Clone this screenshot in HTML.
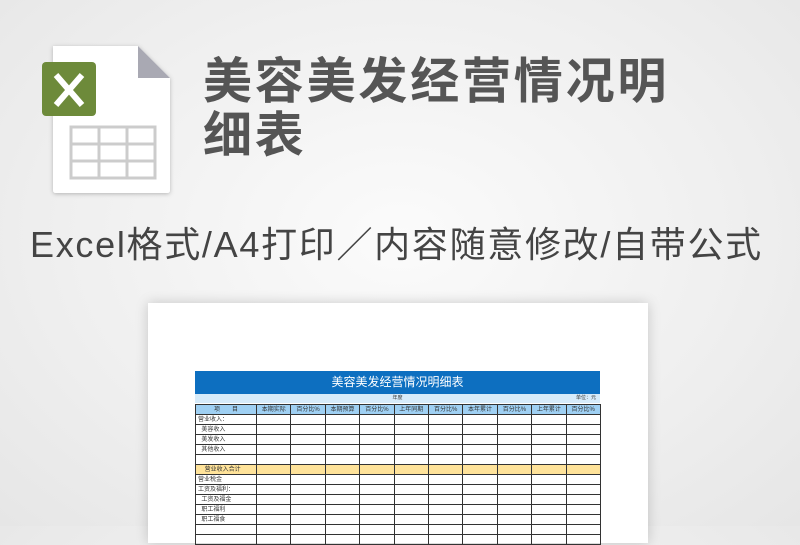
<!DOCTYPE html>
<html><head><meta charset="utf-8"><style>
body{margin:0;width:800px;height:526px;overflow:hidden;background:radial-gradient(ellipse at 50% 45%,#fbfbfb 0%,#efefef 60%,#e6e6e6 100%);font-family:"Liberation Sans","Noto Sans CJK SC",sans-serif;position:relative}
.t{position:absolute;left:203px;color:#555;font-weight:bold;font-size:49px;line-height:52px;letter-spacing:2.8px}
.sub{position:absolute;left:30px;top:216px;font-size:36px;color:#444;white-space:nowrap;letter-spacing:1.7px}
.paper{position:absolute;left:148px;top:303px;width:500px;height:240px;background:#fff;box-shadow:0 0 12px rgba(0,0,0,.18)}
table{position:absolute;left:47px;top:68px;border-collapse:collapse;font-size:6px;color:#333;table-layout:fixed}
td{border:1px solid #333;height:10px;padding:0 2px;white-space:nowrap;line-height:8px;overflow:hidden;box-sizing:border-box}
.h td{background:#9fd0f3;text-align:center;color:#333}
.y td{background:#ffe39a}
</style></head><body>
<svg style="position:absolute;left:38px;top:40px" width="140" height="160">
<defs><filter id="s"><feDropShadow dx="0" dy="1" stdDeviation="2" flood-opacity=".25"/></filter></defs>
<path d="M15 6 H100 L132 38 V150 Q132 153 129 153 H18 Q15 153 15 150 Z" fill="#fff" filter="url(#s)"/>
<path d="M100 6 L132 38 H100 Z" fill="#a9a9b3"/>
<rect x="4" y="22" width="54" height="54" rx="4" fill="#6d8a3a"/>
<path d="M18 35 L44 65 M44 35 L18 65" stroke="#fff" stroke-width="6"/>
<g stroke="#ccc" stroke-width="3" fill="none"><rect x="33" y="87" width="84" height="51"/><line x1="61" y1="87" x2="61" y2="138"/><line x1="89" y1="87" x2="89" y2="138"/><line x1="33" y1="104" x2="117" y2="104"/><line x1="33" y1="121" x2="117" y2="121"/></g>
</svg>
<div class="t" style="top:56px">美容美发经营情况明</div>
<div class="t" style="top:110px">细表</div>
<div class="sub">Excel格式/A4打印／内容随意修改/自带公式</div>
<div class="paper">
<div style="position:absolute;left:47px;top:68px;width:405px;height:23px;background:#0d6fc0;color:#fff;font-size:12px;text-align:center;line-height:23px">美容美发经营情况明细表</div>
<div style="position:absolute;left:47px;top:91px;width:405px;height:9px;background:#d6ebfa;font-size:5px;line-height:9px;text-align:center;color:#333">年度<span style="position:absolute;right:4px">单位：元</span></div>
<table style="top:101px">
<colgroup><col style="width:61px"><col span="10" style="width:34.4px"></colgroup>
<tr class="h"><td>项　　目</td><td>本期实际</td><td>百分比%</td><td>本期预算</td><td>百分比%</td><td>上年同期</td><td>百分比%</td><td>本年累计</td><td>百分比%</td><td>上年累计</td><td>百分比%</td></tr>
<tr><td>营业收入：</td><td></td><td></td><td></td><td></td><td></td><td></td><td></td><td></td><td></td><td></td></tr>
<tr><td>&nbsp;&nbsp;美容收入</td><td></td><td></td><td></td><td></td><td></td><td></td><td></td><td></td><td></td><td></td></tr>
<tr><td>&nbsp;&nbsp;美发收入</td><td></td><td></td><td></td><td></td><td></td><td></td><td></td><td></td><td></td><td></td></tr>
<tr><td>&nbsp;&nbsp;其他收入</td><td></td><td></td><td></td><td></td><td></td><td></td><td></td><td></td><td></td><td></td></tr>
<tr><td></td><td></td><td></td><td></td><td></td><td></td><td></td><td></td><td></td><td></td><td></td></tr>
<tr class="y"><td>&nbsp;&nbsp;&nbsp;&nbsp;营业收入合计</td><td></td><td></td><td></td><td></td><td></td><td></td><td></td><td></td><td></td><td></td></tr>
<tr><td>营业税金</td><td></td><td></td><td></td><td></td><td></td><td></td><td></td><td></td><td></td><td></td></tr>
<tr><td>工资及福利：</td><td></td><td></td><td></td><td></td><td></td><td></td><td></td><td></td><td></td><td></td></tr>
<tr><td>&nbsp;&nbsp;工资及福金</td><td></td><td></td><td></td><td></td><td></td><td></td><td></td><td></td><td></td><td></td></tr>
<tr><td>&nbsp;&nbsp;职工福利</td><td></td><td></td><td></td><td></td><td></td><td></td><td></td><td></td><td></td><td></td></tr>
<tr><td>&nbsp;&nbsp;职工福食</td><td></td><td></td><td></td><td></td><td></td><td></td><td></td><td></td><td></td><td></td></tr>
<tr><td></td><td></td><td></td><td></td><td></td><td></td><td></td><td></td><td></td><td></td><td></td></tr>
<tr><td></td><td></td><td></td><td></td><td></td><td></td><td></td><td></td><td></td><td></td><td></td></tr>
</table>
</div>
</body></html>
